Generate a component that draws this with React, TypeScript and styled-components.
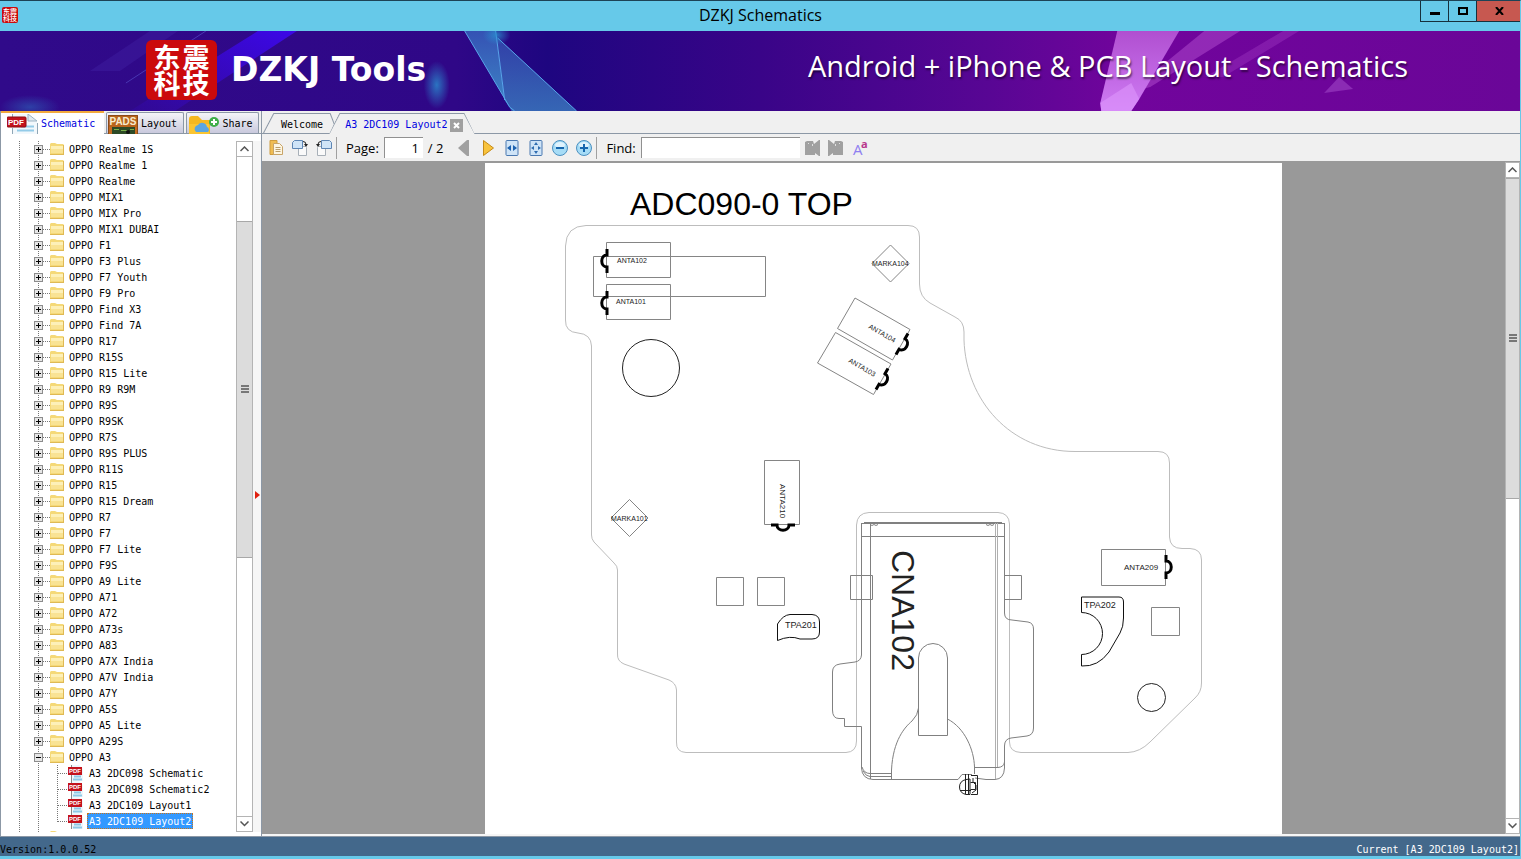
import React, { useState } from "react";
import styled, { createGlobalStyle, css } from "styled-components";

const MONO = '"DejaVu Sans Mono", "Liberation Mono", monospace';
const UI = '"Open Sans", "Noto Sans", sans-serif';
const CJK = '"Noto Sans CJK SC", sans-serif';

const GlobalStyle = createGlobalStyle`
  *, *::before, *::after { box-sizing: border-box; }
  body { margin: 0; font-family: ${UI}; color: #000; }
  button, input { font: inherit; color: inherit; margin: 0; }
  button { padding: 0; border: 0; background: none; cursor: pointer; }
`;

const Window = styled.div`
  display: flex;
  flex-direction: column;
  height: 100vh;
  min-height: 480px;
  background: #f0f0f0;
  border-top: 1px solid #1d4356;
  border-right: 1px solid #66c9e9;
  border-bottom: 3px solid #66c9e9;
  overflow: hidden;
`;

/* ---------- title bar ---------- */

const TitleBar = styled.header`
  display: grid;
  grid-template-columns: 1fr auto 1fr;
  flex: none;
  height: 30px;
  background: #66c9e9;
  margin-right: -1px;
`;

const Seal = styled.span<{ $small?: boolean }>`
  display: grid;
  grid-template-columns: auto auto;
  place-content: center;
  gap: ${(p) => (p.$small ? "0" : "0 2px")};
  flex: none;
  width: ${(p) => (p.$small ? 16 : 71)}px;
  height: ${(p) => (p.$small ? 16 : 60)}px;
  border-radius: ${(p) => (p.$small ? 2 : 6)}px;
  background: #cb0a0c;
  color: #fff;
  font: ${(p) => (p.$small ? "500 7px/7px" : "700 27px/26px")} ${CJK};
`;

const TitleIcon = styled.div`
  padding: 6px 2px;
`;

const WindowTitle = styled.h1`
  margin: 0;
  font-size: 16px;
  line-height: 28px;
  font-weight: 400;
`;

const WindowButtons = styled.div`
  display: flex;
  justify-content: flex-end;
  height: 21px;
`;

const WindowButton = styled.button<{ $close?: boolean }>`
  display: grid;
  place-items: center;
  width: ${(p) => (p.$close ? 45 : 28)}px;
  border: solid #16303c;
  border-width: 0 0 1px 1px;
  background: ${(p) => (p.$close ? "#c75850" : "transparent")};
`;

/* ---------- banner ---------- */

const Banner = styled.div`
  display: grid;
  flex: none;
  height: 80px;
  overflow: hidden;
  > * { grid-area: 1 / 1; }
`;

const BannerArt = styled.svg`
  width: 100%;
  height: 80px;
`;

const BannerContent = styled.div`
  display: flex;
  align-items: center;
  justify-content: space-between;
  z-index: 1;
  padding: 0 112px 2px 146px;
  color: #fff;
  white-space: nowrap;
`;

const Brand = styled.div`
  display: flex;
  align-items: center;
  gap: 14px;
  font: 700 33px/40px "DejaVu Sans", Verdana, sans-serif;
`;

const Tagline = styled.p`
  margin: 0;
  padding-bottom: 8px;
  font: 400 29px/40px ${UI};
  text-shadow: 1px 2px 2px #0008;
`;

/* ---------- body ---------- */

const Body = styled.main`
  display: flex;
  flex: 1;
  min-height: 0;
`;

const Sidebar = styled.aside`
  display: flex;
  flex-direction: column;
  flex: none;
  width: 262px;
  border: solid #8c98a6;
  border-width: 0 1px 0 1px;
  background: #f0f0f0;
`;

const SideTabs = styled.div`
  display: flex;
  align-items: flex-end;
  flex: none;
  height: 23px;
  gap: 2px;
  padding-right: 2px;
  border-bottom: 1px solid #8c98a6;
`;

const SideTab = styled.button<{ $active?: boolean }>`
  display: flex;
  align-items: center;
  gap: 3px;
  flex: auto;
  height: 21px;
  padding: 2px 4px 0 1px;
  border: 1px solid #8c98a6;
  border-bottom: 0;
  border-radius: 2px 2px 0 0;
  background: linear-gradient(#f4f4f8, #c9c9dd);
  font: 10px/16px ${MONO};
  ${(p) =>
    p.$active &&
    css`
      flex: 0 0 103px;
      height: 23px;
      margin-bottom: -1px;
      padding: 0 6px;
      border: 0;
      border-top: 2px solid #f2a93c;
      border-radius: 0;
      background: #fff;
      color: #0000e0;
    `}
`;

const SidePane = styled.div`
  display: flex;
  flex: 1;
  min-height: 0;
  padding: 7px 0 4px;
  background: #fff;
`;

const Tree = styled.ul`
  flex: 1;
  min-width: 0;
  margin: 0;
  padding: 0;
  list-style: none;
  overflow: hidden;
  background: repeating-linear-gradient(#777 0 1px, transparent 1px 2px) 18px 0 / 1px 100% no-repeat;
`;

const dotsV = "repeating-linear-gradient(#777 0 1px, transparent 1px 2px)";
const dotsH = "repeating-linear-gradient(90deg, #777 0 1px, transparent 1px 2px)";

const TreeRow = styled.li`
  display: flex;
  align-items: center;
  height: 16px;
  padding-left: 33px;
  background:
    ${dotsV} 37px 0 / 1px 100% no-repeat,
    ${dotsH} 42px 8px / 7px 1px no-repeat;
`;

const FileRow = styled.li<{ $last?: boolean }>`
  display: flex;
  align-items: center;
  height: 16px;
  padding-left: 66px;
  background:
    ${dotsV} 37px 0 / 1px 100% no-repeat,
    ${dotsV} 56px 0 / 1px ${(p) => (p.$last ? "9px" : "100%")} no-repeat,
    ${dotsH} 57px 8px / 10px 1px no-repeat;
`;

const Expander = styled.button`
  display: grid;
  width: 9px;
  height: 9px;
  margin-right: 7px;
  border: 1px solid #8c8c8c;
  background: #e6e6e6;
  svg { width: 7px; height: 7px; }
`;

const TreeLabel = styled.button<{ $selected?: boolean; $file?: boolean }>`
  height: 16px;
  margin-left: ${(p) => (p.$file ? 4 : 3)}px;
  padding: 2px 1px 0;
  border: 1px solid transparent;
  font: 10px/12px ${MONO};
  white-space: nowrap;
  ${(p) =>
    p.$selected &&
    css`
      border: 1px dotted #c8741a;
      background: #3399ff;
      color: #fff;
    `}
`;

const Splitter = styled.div`
  display: grid;
  place-items: center;
  width: 8px;
  padding-top: 16px;
  background: #f6f6f6;
`;

/* ---------- scroll bars ---------- */

const ScrollTrack = styled.div<{ $width: number }>`
  display: flex;
  flex-direction: column;
  flex: none;
  width: ${(p) => p.$width}px;
  border: solid #b4b4b4;
  border-width: 0 1px;
  background: #fff;
`;

const ScrollArrow = styled.button`
  display: grid;
  place-items: center;
  flex: none;
  height: 16px;
  border: solid #b4b4b4;
  border-width: 1px 0;
  background: #fff;
`;

const ScrollSpace = styled.div<{ $grow: number }>`
  flex: ${(p) => p.$grow} 1 0;
`;

const ScrollThumb = styled.div<{ $grow: number }>`
  display: grid;
  place-items: center;
  flex: ${(p) => p.$grow} 1 0;
  border: solid #a8a8a8;
  border-width: 1px 0;
  background: #dcdcdc;
`;

/* ---------- document area ---------- */

const Workspace = styled.section`
  display: flex;
  flex-direction: column;
  flex: 1;
  min-width: 0;
`;

const DocTabs = styled.div`
  display: flex;
  align-items: flex-end;
  flex: none;
  height: 23px;
  background: linear-gradient(#8c98a6, #8c98a6) 0 100% / 100% 1px no-repeat #f0f0f0;
`;

const DocTab = styled.div<{ $active?: boolean }>`
  display: flex;
  align-items: stretch;
  height: 21px;
  margin-left: ${(p) => (p.$active ? -9 : 1)}px;
  color: ${(p) => (p.$active ? "#0000e0" : "#000")};
  background: ${(p) => (p.$active ? "#f0f0f0" : "transparent")};
  clip-path: ${(p) => (p.$active ? "polygon(10px 0, calc(100% - 10px) 0, 100% 100%, 0 100%)" : "none")};
  &::before, &::after {
    content: "";
    width: 11px;
    background: linear-gradient(to bottom right, transparent calc(50% - 1px), #8c98a6 50%, transparent calc(50% + 1px));
  }
  &::after {
    width: ${(p) => (p.$active ? 11 : 8)}px;
    background: linear-gradient(to bottom left, transparent calc(50% - 1px), #8c98a6 50%, transparent calc(50% + 1px));
  }
`;

const DocTabBody = styled.span<{ $closable?: boolean }>`
  display: flex;
  align-items: center;
  gap: 2px;
  padding: ${(p) => (p.$closable ? "2px 1px 0 5px" : "2px 7px 0")};
  border-top: 1px solid #8c98a6;
  font: 10px/18px ${MONO};
`;

const CloseButton = styled.button`
  display: grid;
  place-items: center;
  width: 13px;
  height: 13px;
  background: #a0a0a0;
`;

const Toolbar = styled.div`
  display: flex;
  align-items: center;
  flex: none;
  height: 28px;
  padding-left: 2px;
  border-bottom: 1px solid #999;
  background: #f0f0f0;
  font-size: 13px;
  line-height: 20px;
`;

const ToolButton = styled.button`
  display: grid;
  place-items: center;
  width: 24px;
  height: 24px;
  flex: none;
`;

const Divider = styled.span`
  width: 1px;
  height: 22px;
  background: #a0a0a0;
`;

const ToolLabel = styled.label`
  display: flex;
  align-items: center;
  gap: 5px;
  padding-left: 9px;
`;

const ToolInput = styled.input<{ $width: number; $number?: boolean }>`
  width: ${(p) => p.$width}px;
  height: 21px;
  padding: 0 4px;
  border: solid #909090;
  border-width: 1px 0 0 1px;
  background: #fff;
  text-align: ${(p) => (p.$number ? "right" : "left")};
  outline: none;
`;

const PageCount = styled.span`
  padding: 0 9px 0 5px;
`;

const Viewer = styled.div`
  display: flex;
  flex: 1;
  min-height: 0;
  background: #999;
  border-bottom: 2px solid #f6f6f6;
`;

const PageArea = styled.div`
  display: flex;
  justify-content: center;
  flex: 1;
  min-width: 0;
  padding-top: 1px;
`;

const Page = styled.div`
  flex: 0 1 797px;
  overflow: hidden;
  background: #fff;
`;

const Board = styled.svg`
  display: block;
  width: 100%;
  fill: none;
  stroke: #666;
  stroke-width: 1;
  text {
    fill: #222;
    stroke: none;
    font-family: "Liberation Sans", Arial, sans-serif;
  }
`;

const StatusBar = styled.footer`
  display: flex;
  justify-content: space-between;
  align-items: flex-end;
  flex: none;
  height: 20px;
  border-top: 1px solid #8c98a6;
  background: #43688b;
  font: 10px/12px ${MONO};
`;

const StatusCurrent = styled.span`
  padding-right: 1px;
  color: #fff;
`;

/* ---------- small drawings ---------- */

const FolderIcon = () => (
  <svg width="14" height="14" viewBox="0 0 14 14" aria-hidden="true">
    <path d="M0 12V2l1-1h4l2 1h6l1 1v9l-1 1H1z" fill="#f5d978" />
    <path d="M1 4h12v3H1z" fill="#fdf0b8" />
    <path d="M1 7h12v4H1z" fill="#f9e394" />
    <path d="M0 12.500h14M13.500 3v10" stroke="#dfb955" />
  </svg>
);

const PdfBadge = () => (
  <svg width="16" height="16" viewBox="0 0 16 16" aria-hidden="true">
    <path d="M4 0h8l4 4v12H4z" fill="#eef6fb" />
    <path d="M4.500 0v2M4.500 10v6" stroke="#888" />
    <path d="M7 11.500h7M6 14.500h9" stroke="#8cc8e6" strokeWidth="2" />
    <rect x="1" y="2" width="14" height="8" fill="#c4121c" />
    <text x="8" y="8" textAnchor="middle" fontFamily="Liberation Sans, sans-serif" fontSize="6" fontWeight="700" fill="#fff">PDF</text>
  </svg>
);

const SchematicIcon = () => (
  <svg width="31" height="20" viewBox="0 0 31 20" aria-hidden="true">
    <path d="M6 0h15l9 8v12H6z" fill="#f2f8fc" />
    <path d="M21 0v7h9z" fill="#dfe9f0" stroke="#9db4c4" />
    <path d="M5.500 0v3M5.500 14v6M30.500 9v11" stroke="#8fa6b6" />
    <path d="M14 12.500h13M10 16.500h17" stroke="#93cbe8" strokeWidth="2" />
    <rect x="0" y="3" width="19" height="10" rx="1" fill="#c4121c" stroke="#8c0c12" />
    <text x="9" y="11" textAnchor="middle" fontFamily="Liberation Sans, sans-serif" fontSize="8" fontWeight="700" fill="#fff">PDF</text>
  </svg>
);

const PadsIcon = () => (
  <svg width="30" height="19" viewBox="0 0 30 19" aria-hidden="true">
    <rect width="30" height="19" fill="#c66a1e" />
    <path d="M0 0h30v12H0z" fill="#b8641c" />
    <path d="M.5 19V.5h29V19" fill="none" stroke="#8a4a18" />
    <path d="M4 12h23v7H4z" fill="#2d4a26" />
    <path d="M6 14.500h5M13 15.500h7M22 14.500h4" stroke="#7ab04a" />
    <circle cx="20" cy="17" r="2" fill="#111" />
    <text x="15" y="10" textAnchor="middle" fontFamily="Liberation Sans, sans-serif" fontSize="10" fontWeight="700" fill="#f7eccf">PADS</text>
  </svg>
);

const ShareIcon = () => (
  <svg width="32" height="19" viewBox="0 0 32 19" aria-hidden="true">
    <path d="M1 19V4q0-3 3-3h6l4 4h8v14z" fill="#f5b820" />
    <path d="M1 19V9h20v10z" fill="#fbc531" />
    <path d="M8 17a4 4 0 0 1 2-7 5 5 0 0 1 9 2 3 3 0 0 1 1 5z" fill="#5aa5e0" />
    <circle cx="26" cy="7" r="5" fill="#3fae49" />
    <path d="M26 4v6M23 7h6" stroke="#fff" strokeWidth="2" />
  </svg>
);

const Chevron = ({ down }: { down?: boolean }) => (
  <svg width="9" height="6" viewBox="0 0 9 6" aria-hidden="true">
    <path d={down ? "M.5 .500l4 4 4-4" : "M.5 5l4-4 4 4"} fill="none" stroke="#555" strokeWidth="1.500" />
  </svg>
);

const Grip = () => (
  <svg width="8" height="8" viewBox="0 0 8 8" aria-hidden="true">
    <path d="M0 1h8M0 4h8M0 7h8" stroke="#555" strokeWidth="1.500" />
  </svg>
);

const CopyIcon = () => (
  <svg width="16" height="16" viewBox="0 0 16 16" aria-hidden="true">
    <path d="M2 .500h7v14H2z" fill="#f0bd52" stroke="#cf9c3c" />
    <path d="M5.500 3.500h6l3 3v8h-9z" fill="#fdf6e2" stroke="#c8a468" />
    <path d="M7.500 7.500h5M7.500 9.500h5M7.500 11.500h5" stroke="#b99d6a" />
  </svg>
);

const RotateIcon = ({ flip }: { flip?: boolean }) => (
  <svg width="16" height="16" viewBox="0 0 16 16" aria-hidden="true">
    <g transform={flip ? "translate(16 0) scale(-1 1)" : undefined}>
      <path d="M6.500 6.500h7l1 1v8h-8z" fill="#fafafa" stroke="#a8b0b8" />
      <path d="M2.500 .500h8v8h-10v-6z" fill="#cfe4f7" stroke="#5e86b4" />
      <path d="M11 1.500q3 0 3 3" fill="none" stroke="#222" />
      <path d="M12 4h4l-2 3z" fill="#222" />
    </g>
  </svg>
);

const PrevIcon = () => (
  <svg width="16" height="18" viewBox="0 0 16 18" aria-hidden="true">
    <path d="M13 1v16h-2L2 9l9-8z" fill="#a0a0a0" />
  </svg>
);

const NextIcon = () => (
  <svg width="16" height="18" viewBox="0 0 16 18" aria-hidden="true">
    <path d="M3.500 1.500L13.500 9l-10 7.500z" fill="#f8c33c" stroke="#c58a18" />
  </svg>
);

const FitIcon = ({ page }: { page?: boolean }) => (
  <svg width="14" height="16" viewBox="0 0 14 16" aria-hidden="true">
    <rect x="1" y=".5" width="12" height="15" rx="1" fill="#cfe4f7" stroke="#4a78b0" />
    {page ? (
      <path d="M7 2l2 3H5zM7 14l2-3H5zM2 8l3-2v4zM12 8L9 6v4z" fill="#2f6db0" />
    ) : (
      <path d="M2 8l4-3v6zM12 8L8 5v6z" fill="#1d62b0" />
    )}
  </svg>
);

const ZoomIcon = ({ plus }: { plus?: boolean }) => (
  <svg width="16" height="16" viewBox="0 0 16 16" aria-hidden="true">
    <circle cx="8" cy="8" r="7.500" fill="#a6dcf6" stroke="#4b90c0" />
    <ellipse cx="8" cy="5" rx="5" ry="3" fill="#dff3fd" />
    <path d={plus ? "M4 8h8M8 4v8" : "M4 8h8"} stroke="#1667ae" strokeWidth="2" />
  </svg>
);

const FindIcon = ({ flip }: { flip?: boolean }) => (
  <svg width="16" height="16" viewBox="0 0 16 16" aria-hidden="true">
    <g transform={flip ? "translate(16 0) scale(-1 1)" : undefined} fill="#a0a0a0">
      <path d="M1 2l2-1h6l1 3 5-4h1v16h-1l-4-3v2H1z" />
      <path d="M4 3h1v1H4zM8 4h1v2H8z" fill="#e0e0e0" />
    </g>
  </svg>
);

const CaseIcon = () => (
  <svg width="18" height="22" viewBox="0 0 18 22" aria-hidden="true">
    <text x="2" y="18" fontFamily="Open Sans, sans-serif" fontSize="15" fill="#8f7ff0">A</text>
    <text x="10" y="11" fontFamily="Open Sans, sans-serif" fontSize="11" fontWeight="700" fill="#b8368c">a</text>
  </svg>
);

const BannerBackground = () => (
  <BannerArt viewBox="0 0 1521 80" preserveAspectRatio="none" aria-hidden="true">
    <defs>
      <linearGradient id="base">
        <stop offset="0" stopColor="#300a8a" />
        <stop offset=".3" stopColor="#2f0787" />
        <stop offset=".36" stopColor="#1e0680" />
        <stop offset=".5" stopColor="#390488" />
        <stop offset=".65" stopColor="#580694" />
        <stop offset=".74" stopColor="#71049c" />
        <stop offset="1" stopColor="#6a0698" />
      </linearGradient>
      <linearGradient id="beam" x1="1" y1="0" x2="0" y2="1">
        <stop offset="0" stopColor="#3c08e8" />
        <stop offset="1" stopColor="#3c08e8" stopOpacity=".1" />
      </linearGradient>
      <linearGradient id="shard" x1="0" y1="0" x2="0" y2="1">
        <stop offset="0" stopColor="#3552b4" />
        <stop offset="1" stopColor="#3d86c6" />
      </linearGradient>
      <linearGradient id="pink" x1="0" y1="0" x2="0" y2="1">
        <stop offset="0" stopColor="#b04fd0" />
        <stop offset="1" stopColor="#cf7cf4" />
      </linearGradient>
      <radialGradient id="glow">
        <stop offset="0" stopColor="#2a8fd0" stopOpacity=".8" />
        <stop offset="1" stopColor="#2a8fd0" stopOpacity="0" />
      </radialGradient>
    </defs>
    <rect width="1521" height="80" fill="url(#base)" />
    <path d="M258 0h39L175 80h-45z" fill="url(#beam)" />
    <path d="M150 0h28L120 40h-30z" fill="#4a2bb0" opacity=".3" />
    <path d="M206 0L126 52" stroke="#5a56d0" opacity=".6" />
    <ellipse cx="437" cy="54" rx="13" ry="24" fill="url(#glow)" />
    <ellipse cx="30" cy="76" rx="30" ry="12" fill="url(#glow)" opacity=".5" />
    <path d="M465 0h31l9 69 5 7z" fill="url(#shard)" />
    <path d="M497 6l80 74h-65l-7-11z" fill="url(#shard)" opacity=".75" />
    <path d="M465 0l45 76M496 0l9 69M498 7l79 73M510 76l5 4" fill="none" stroke="#58a6ea" />
    <ellipse cx="497" cy="4" rx="14" ry="10" fill="url(#glow)" />
    <path d="M1205 0h36l-90 56-22 6z" fill="#a842c8" opacity=".6" />
    <path d="M1284 0h16l-76 46h-18z" fill="#a842c8" opacity=".35" />
    <path d="M1118 0h62l-40 68-8 12h-30l-1-8z" fill="url(#pink)" />
    <path d="M1101 72l31-20 8 16-8 12h-30z" fill="#dd96fb" opacity=".6" />
    <path d="M1325 62l15-16 14 12z" fill="#8b2bb4" />
  </BannerArt>
);

/* spring contact drawn on one side of an antenna pad */
const Contact = ({ x, y, turn = 0 }: { x: number; y: number; turn?: number }) => (
  <path
    d="M0-12V-6C-7-6-7 6 0 6V12"
    stroke="#000"
    strokeWidth="3"
    transform={`translate(${x} ${y}) rotate(${turn})`}
  />
);

const BoardDrawing = () => (
  <Board viewBox="485 163 797 671" role="img" aria-label="ADC090-0 top side board layout">
    <text x="630" y="215" fontSize="32" style={{ fill: "#000" }}>ADC090-0 TOP</text>
    <path
      stroke="#bdbdbd"
      d="M586 225.500H908Q919.500 225.500 919.500 237V284Q919.500 297 930 303L955 317Q964 321 964 332V340C966 400 1010 451.500 1075 451.500H1158Q1169.500 451.500 1169.500 463V537Q1170 548.500 1182 548.500H1190Q1201.500 549 1201.500 560V683Q1201.500 692 1195 698L1150 742Q1140 752 1128 752.500H1021Q1009.500 752 1009.500 742V524Q1009 513 998 512.500H869Q857 513 856.500 525V741Q856.500 752 846 752.500H686Q676 752 676.500 742V690Q676 683 669 680L624 664Q617 661 617.500 654V570Q617.500 566 614 563L594 542Q591.500 539 591.500 535V346Q591 334 578 333Q565 332 565.500 320V246Q566 226 586 225.500Z"
    />
    <g stroke="#858585">
      <path d="M606.500 242.500h64v35h-64zM606.500 284.500h64v35h-64zM593.500 256.500h172v40h-172z" />
      <path d="M855 298l55 31.500-17.500 30.500-55-31.500zM835.500 332.500l55.500 31.500-17.500 30.500-56-31.500z" />
      <path d="M890.500 245l18.500 18.500-18.500 18.500-18.500-18.500zM629.500 499.500l18.500 18.500-18.500 18.500-18.500-18.500z" />
      <path d="M764.500 460.500h35v64h-35zM1101.500 549.500h64v36h-64z" />
      <path d="M716.500 577.500h27v28h-27zM757.500 577.500h27v28h-27zM1151.500 607.500h28v28h-28z" />
    </g>
    <circle cx="651" cy="368" r="28.500" stroke="#222" />
    <circle cx="1151.500" cy="697.500" r="14" stroke="#222" />
    <Contact x={607} y={261} />
    <Contact x={607} y={303} />
    <Contact x={902} y={344} turn={210} />
    <Contact x={882} y={379} turn={210} />
    <Contact x={783} y={525} turn={-90} />
    <Contact x={1166} y={567} turn={180} />
    <text x="617" y="263" fontSize="7">ANTA102</text>
    <text x="616" y="304" fontSize="7">ANTA101</text>
    <text x="872" y="266" fontSize="7">MARKA104</text>
    <text x="611" y="521" fontSize="7">MARKA101</text>
    <text transform="translate(868 328) rotate(30)" fontSize="7">ANTA104</text>
    <text transform="translate(848 362) rotate(30)" fontSize="7">ANTA103</text>
    <text transform="translate(780 484) rotate(90)" fontSize="8">ANTA210</text>
    <text x="1124" y="570" fontSize="8">ANTA209</text>

    <g stroke="#111">
      <path d="M777.500 640.500V624Q783 615 790 614.500H812Q819.500 615 819.500 622V632Q819.500 639 812 639H800Q790 635 777.500 640.500Z" />
      <path d="M1081.500 597H1119Q1123.500 597 1123.500 602V618Q1123.500 627 1120 633L1109 652Q1098 667 1081.500 666V654.500A21 21 0 0 0 1081.500 612.500Z" />
    </g>
    <text x="785" y="628" fontSize="9">TPA201</text>
    <text x="1084" y="608" fontSize="9">TPA202</text>

    <g stroke="#808080">
      <path d="M861.500 523V655Q861 661 855 662L840 664Q832.500 665 832.500 672V710Q832.500 718.500 839 718.500H844.500V726.500H861.500V768Q862 779 873 779.500H958L962 774.500H972" />
      <path d="M1004.500 523V613Q1004.500 620 1012 620L1028 622Q1033.500 623 1033.500 629V728Q1033.500 735 1027 736L1011 738Q1004.500 739 1004.500 746V768Q1004 779 995 779.500H986L975 778" />
      <path d="M861.500 523.500H1004.500M864 522.500H1002M861.500 536.500H1004.500M870.500 523V779" />
      <path d="M995.500 523V779M997.500 523V768" stroke="#b0b0b0" />
      <path d="M870 524.500q2 2 4 0q2 2 4 0M986 524.500q2 2 4 0q2 2 4 0" />
      <path d="M850.500 575.500h22v24h-22zM1004.500 575.500h17v24h-17" />
      <path d="M862 767Q864 773.500 870 773.500H892M863 771Q866 776.500 870 776.500H892M975 767.500H998Q1004 767 1004.500 762" />
      <path d="M918.500 735.500V658A14.500 14.500 0 0 1 947.500 658V735.500Z" />
      <path d="M891.500 779V770C893 740 905 727 912 721Q918 715 918.500 708M947.500 719C965 728 974 750 974.500 767V774" />
    </g>
    <g stroke="#222">
      <path d="M966 779.500Q959.500 781 959.500 787T966 794.500H970V779ZM965.500 774V794M968.500 774V794M960 790.500H971" />
      <path d="M971 775.500H977.500V794.500H971M973 778V782L976 785V790L972 793M970.500 782.500H975.500V789.500H970.500" />
    </g>
    <text transform="translate(892 550) rotate(90)" fontSize="32">CNA102</text>
  </Board>
);

/* ---------- data ---------- */

const folders = [
  "Realme 1S", "Realme 1", "Realme", "MIX1", "MIX Pro", "MIX1 DUBAI", "F1", "F3 Plus", "F7 Youth", "F9 Pro",
  "Find X3", "Find 7A", "R17", "R15S", "R15 Lite", "R9 R9M", "R9S", "R9SK", "R7S", "R9S PLUS", "R11S", "R15",
  "R15 Dream", "R7", "F7", "F7 Lite", "F9S", "A9 Lite", "A71", "A72", "A73s", "A83", "A7X India", "A7V India",
  "A7Y", "A5S", "A5 Lite", "A29S", "A3",
].map((model) => `OPPO ${model}`);

const files = ["A3 2DC098 Schematic", "A3 2DC098 Schematic2", "A3 2DC109 Layout1", "A3 2DC109 Layout2"];

const ScrollBar = ({ width, parts }: { width: number; parts: [number, number, number] }) => (
  <ScrollTrack $width={width}>
    <ScrollArrow aria-label="Scroll up"><Chevron /></ScrollArrow>
    <ScrollSpace $grow={parts[0]} />
    <ScrollThumb $grow={parts[1]}><Grip /></ScrollThumb>
    <ScrollSpace $grow={parts[2]} />
    <ScrollArrow aria-label="Scroll down"><Chevron down /></ScrollArrow>
  </ScrollTrack>
);

const SealMark = ({ small }: { small?: boolean }) => (
  <Seal $small={small}>
    <span>东</span><span>震</span><span>科</span><span>技</span>
  </Seal>
);

export default function App() {
  const [selected, setSelected] = useState(files[3]);
  const [page, setPage] = useState("1");
  const [query, setQuery] = useState("");

  return (
    <Window>
      <GlobalStyle />
      <TitleBar>
        <TitleIcon><SealMark small /></TitleIcon>
        <WindowTitle>DZKJ Schematics</WindowTitle>
        <WindowButtons>
          <WindowButton aria-label="Minimize">
            <svg width="10" height="8"><path d="M0 6.500h10" stroke="#000" strokeWidth="3" /></svg>
          </WindowButton>
          <WindowButton aria-label="Maximize">
            <svg width="10" height="8"><path d="M1 1h8v6H1z" fill="none" stroke="#000" strokeWidth="2" /></svg>
          </WindowButton>
          <WindowButton $close aria-label="Close">
            <svg width="9" height="8"><path d="M1 0l7 8M8 0L1 8" stroke="#000" strokeWidth="2" /></svg>
          </WindowButton>
        </WindowButtons>
      </TitleBar>

      <Banner>
        <BannerBackground />
        <BannerContent>
          <Brand><SealMark />DZKJ Tools</Brand>
          <Tagline>Android + iPhone &amp; PCB Layout - Schematics</Tagline>
        </BannerContent>
      </Banner>

      <Body>
        <Sidebar>
          <SideTabs>
            <SideTab $active><SchematicIcon />Schematic</SideTab>
            <SideTab><PadsIcon />Layout</SideTab>
            <SideTab><ShareIcon />Share</SideTab>
          </SideTabs>
          <SidePane>
            <Tree>
              {folders.map((name, i) => (
                <TreeRow key={name}>
                  <Expander aria-label={`Toggle ${name}`}>
                    <svg viewBox="0 0 7 7">
                      <path d={i === folders.length - 1 ? "M1 3.500h5" : "M1 3.500h5M3.500 1v5"} stroke="#000" />
                    </svg>
                  </Expander>
                  <FolderIcon />
                  <TreeLabel>{name}</TreeLabel>
                </TreeRow>
              ))}
              {files.map((name, i) => (
                <FileRow key={name} $last={i === files.length - 1}>
                  <PdfBadge />
                  <TreeLabel $file $selected={selected === name} onClick={() => setSelected(name)}>{name}</TreeLabel>
                </FileRow>
              ))}
              <TreeRow>
                <Expander aria-label="Toggle folder" />
                <FolderIcon />
              </TreeRow>
            </Tree>
            <ScrollBar width={17} parts={[64, 336, 259]} />
            <Splitter>
              <svg width="5" height="8" aria-hidden="true"><path d="M0 0l5 4-5 4z" fill="#e02010" /></svg>
            </Splitter>
          </SidePane>
        </Sidebar>

        <Workspace>
          <DocTabs>
            <DocTab><DocTabBody>Welcome</DocTabBody></DocTab>
            <DocTab $active>
              <DocTabBody $closable>
                A3 2DC109 Layout2
                <CloseButton aria-label="Close tab">
                  <svg width="7" height="7"><path d="M1 1l5 5M6 1L1 6" stroke="#fff" strokeWidth="2" /></svg>
                </CloseButton>
              </DocTabBody>
            </DocTab>
          </DocTabs>
          <Toolbar>
            <ToolButton aria-label="Copy"><CopyIcon /></ToolButton>
            <ToolButton aria-label="Rotate right"><RotateIcon /></ToolButton>
            <ToolButton aria-label="Rotate left"><RotateIcon flip /></ToolButton>
            <Divider />
            <ToolLabel>
              Page:
              <ToolInput $width={39} $number value={page} onChange={(e) => setPage(e.target.value)} />
            </ToolLabel>
            <PageCount>/ 2</PageCount>
            <ToolButton aria-label="Previous page"><PrevIcon /></ToolButton>
            <ToolButton aria-label="Next page"><NextIcon /></ToolButton>
            <ToolButton aria-label="Fit width"><FitIcon /></ToolButton>
            <ToolButton aria-label="Fit page"><FitIcon page /></ToolButton>
            <ToolButton aria-label="Zoom out"><ZoomIcon /></ToolButton>
            <ToolButton aria-label="Zoom in"><ZoomIcon plus /></ToolButton>
            <Divider />
            <ToolLabel>
              Find:
              <ToolInput $width={159} value={query} onChange={(e) => setQuery(e.target.value)} />
            </ToolLabel>
            <ToolButton aria-label="Find previous"><FindIcon /></ToolButton>
            <ToolButton aria-label="Find next"><FindIcon flip /></ToolButton>
            <ToolButton aria-label="Match case"><CaseIcon /></ToolButton>
          </Toolbar>
          <Viewer>
            <PageArea>
              <Page><BoardDrawing /></Page>
            </PageArea>
            <ScrollBar width={15} parts={[0, 321, 322]} />
          </Viewer>
        </Workspace>
      </Body>

      <StatusBar>
        <span>Version:1.0.0.52</span>
        <StatusCurrent>Current [A3 2DC109 Layout2]</StatusCurrent>
      </StatusBar>
    </Window>
  );
}
